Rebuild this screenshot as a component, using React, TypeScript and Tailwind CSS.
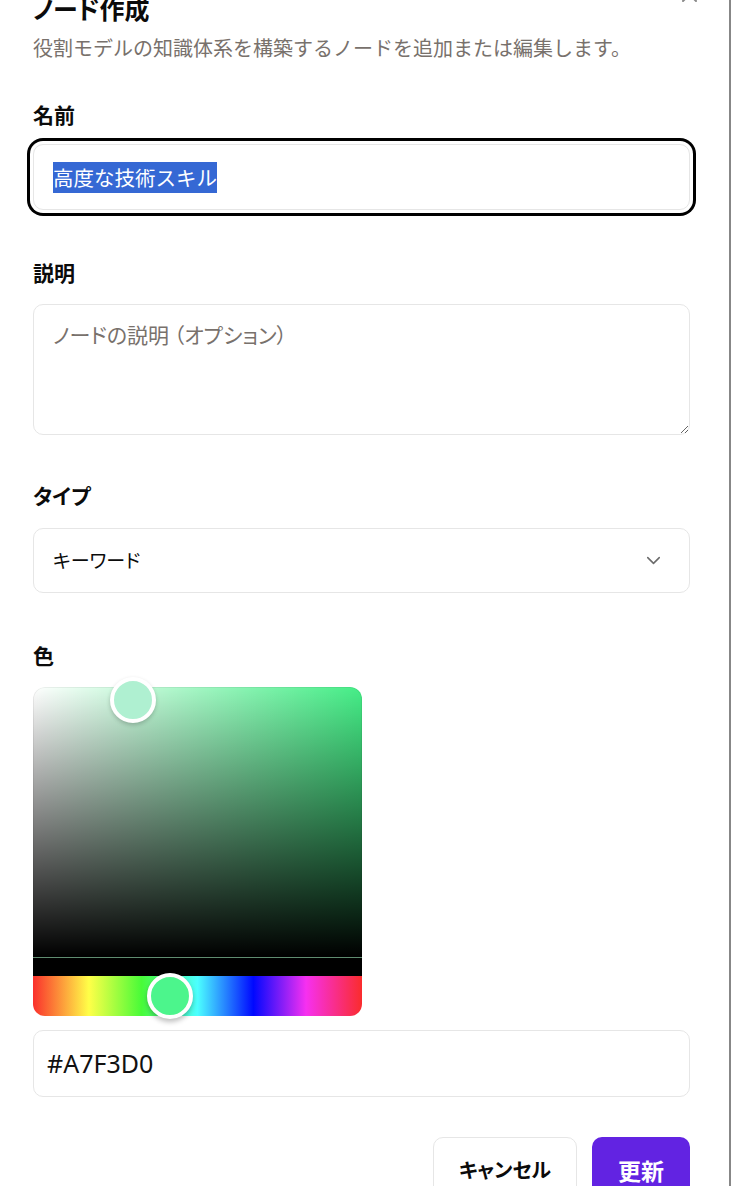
import { ChevronDown } from "lucide-react";

const jp = "font-['Noto_Sans_CJK_JP','Noto_Sans',sans-serif]";
const palt = "[font-feature-settings:'palt']";

function FieldLabel({ children, className = "" }: { children: React.ReactNode; className?: string }) {
  return (
    <div className={`h-[24px] leading-[24px] text-[21px] font-bold text-[#0b0b0b] ${palt} ${className}`}>{children}</div>
  );
}

function ColorPicker() {
  return (
    <div className="relative w-[329px] mt-[20px]">
      <div className="h-[270px] rounded-t-[12px] bg-[#45ee87] [background-image:linear-gradient(to_top,#000,rgba(0,0,0,0)),linear-gradient(to_right,#fff,rgba(255,255,255,0))] shadow-[inset_0_0_0_1px_rgba(0,0,0,0.06)]" />
      <div className="h-[19px] bg-black border-t border-[#5f8c70]" />
      <div className="h-[40px] rounded-b-[12px] [background-image:linear-gradient(to_right,#fa302c_0%,#ffff48_17%,#48fb38_33%,#4cffff_50%,#0008ff_67%,#f630f0_83%,#fa2c2c_100%)]" />
      {/* saturation pointer */}
      <div className="absolute left-[77px] top-[-10px] w-[46px] h-[46px] rounded-full border-[4px] border-white bg-[#aff0d1] shadow-[0_2px_4px_rgba(0,0,0,0.2)]" />
      {/* hue pointer */}
      <div className="absolute left-[114px] top-[286px] w-[46px] h-[46px] rounded-full border-[4px] border-white bg-[#4cf58c] shadow-[0_3px_5px_rgba(0,0,0,0.25)]" />
    </div>
  );
}

export default function App() {
  return (
    <div className={`w-[731px] h-[1186px] overflow-hidden bg-white ${jp}`}>
      <div className="relative w-[731px] h-[1186px] border-r-2 border-[#878787]">
        {/* close icon, mostly scrolled out */}
        <svg
          className="absolute left-[681px] top-[-14px]"
          width="17"
          height="17"
          viewBox="0 0 17 17"
          fill="none"
          stroke="#8a8a8a"
          strokeWidth="2"
          strokeLinecap="round"
        >
          <path d="M2 2l13 13M15 2L2 15" />
        </svg>

        <div className="w-[690px] pl-[33px] flex flex-col">
          <h2 className={`mt-[-8px] h-[32px] leading-[32px] text-[25px] font-bold text-[#0b0b0b] ${palt}`}>ノード作成</h2>
          <p className="mt-[10px] h-[28px] leading-[28px] text-[20px] text-[#78716c] whitespace-nowrap">
            役割モデルの知識体系を構築するノードを追加または編集します。
          </p>

          <FieldLabel className="mt-[40px]">名前</FieldLabel>
          <div className="mt-[18px] h-[66px] rounded-[10px] border border-[#e6e6e6] bg-white ring-3 ring-black ring-offset-3 flex items-center px-[19px]">
            <span className="bg-[#3568d4] text-white text-[20.5px] leading-[31px]">高度な技術スキル</span>
          </div>

          <FieldLabel className="mt-[50px]">説明</FieldLabel>
          <textarea
            className={`mt-[20px] h-[131px] w-full rounded-[10px] border border-[#e6e6e6] px-[19px] py-[15px] text-[21px] leading-[28px] text-[#0b0b0b] placeholder:text-[#78716c] outline-none ${palt}`}
            placeholder="ノードの説明 （オプション）"
          />

          <FieldLabel className="mt-[48px]">タイプ</FieldLabel>
          <div className="mt-[21px] h-[65px] rounded-[10px] border border-[#e6e6e6] flex items-center justify-between pl-[19px] pr-[24px]">
            <span className={`text-[19px] text-[#0b0b0b] ${palt}`}>キーワード</span>
            <ChevronDown size={23} strokeWidth={1.6} className="text-[#6b6b6b]" />
          </div>

          <FieldLabel className="mt-[50px]">色</FieldLabel>
          <ColorPicker />

          <div className="mt-[14px] h-[67px] rounded-[10px] border border-[#e6e6e6] flex items-center px-[13px]">
            <span className="font-['Noto_Sans',sans-serif] text-[25px] text-[#111]">#A7F3D0</span>
          </div>

          <div className="mt-[40px] flex justify-end gap-[15px]">
            <button className={`w-[144px] h-[66px] rounded-[10px] border border-[#e6e6e6] bg-white text-[20px] font-bold text-[#0b0b0b] ${palt}`}>
              キャンセル
            </button>
            <button className="w-[98px] h-[66px] rounded-[10px] bg-[#6223e2] text-[23px] font-bold text-white">
              更新
            </button>
          </div>
        </div>
      </div>
    </div>
  );
}
